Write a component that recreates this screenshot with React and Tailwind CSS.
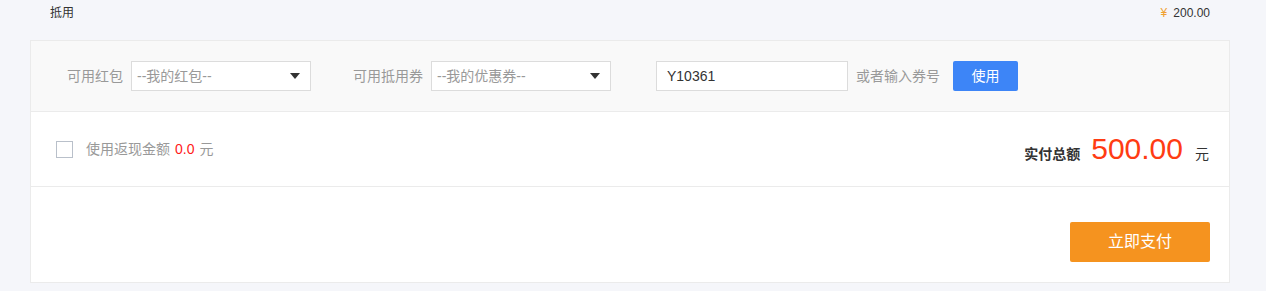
import React from 'react'

const Select = ({placeholder}) => (
  <div className="w-[180px] h-[30px] bg-white border border-[#dcdcdc] flex items-center justify-between pl-[5px] pr-[10px]">
    <span className="text-[14px] text-[#999]">{placeholder}</span>
    <span className="w-0 h-0 border-l-[5px] border-r-[5px] border-t-[6px] border-l-transparent border-r-transparent border-t-[#333]" />
  </div>
)

const App = () => {
  return (
    <div className="w-[1266px] h-[291px] bg-[#f5f6fa] font-['Liberation_Sans','Noto_Sans_CJK_SC',sans-serif] overflow-hidden">
      <div className="h-[26px] flex items-center justify-between pl-[50px] pr-[56px] text-[12px] text-[#333]">
        <span>抵用</span>
        <span><span className="text-[#f0a030] mr-[6px]">¥</span>200.00</span>
      </div>
      <div className="mt-[14px] ml-[30px] w-[1200px] border border-[#ebebeb] bg-white">
        <div className="h-[71px] bg-[#f9f9f9] border-b border-[#ebebeb] flex items-center pl-[36px]">
          <span className="text-[14px] text-[#999] mr-[8px]">可用红包</span>
          <Select placeholder="--我的红包--" />
          <span className="text-[14px] text-[#999] ml-[42px] mr-[8px]">可用抵用券</span>
          <Select placeholder="--我的优惠券--" />
          <input
            readOnly
            value="Y10361"
            className="ml-[45px] w-[192px] h-[30px] bg-white border border-[#dcdcdc] px-[10px] text-[14px] text-[#333] outline-none"
          />
          <span className="text-[14px] text-[#999] ml-[8px]">或者输入券号</span>
          <button className="ml-[13px] w-[65px] h-[30px] rounded-[2px] bg-[#3d85f7] text-white text-[14px]">使用</button>
        </div>
        <div className="h-[75px] border-b border-[#ebebeb] flex items-start justify-between pl-[25px] pr-[20px]">
          <div className="flex items-center mt-[27px]">
            <span className="w-[17px] h-[17px] border border-[#b9c0ca] bg-white" />
            <span className="ml-[13px] text-[14px] text-[#999]">使用返现金额</span>
            <span className="ml-[5px] text-[14px] text-[#ff1a1a]">0.0</span>
            <span className="ml-[5px] text-[14px] text-[#999]">元</span>
          </div>
          <div className="flex items-baseline mt-[17px]">
            <span className="text-[14px] font-bold text-[#333]">实付总额</span>
            <span className="ml-[11px] text-[30px] text-[#ff3c13] leading-[40px]">500.00</span>
            <span className="ml-[12px] text-[14px] text-[#333]">元</span>
          </div>
        </div>
        <div className="h-[95px] flex items-start justify-end pr-[19px]">
          <button className="mt-[35px] w-[140px] h-[40px] rounded-[2px] bg-[#f5931f] text-white text-[16px]">立即支付</button>
        </div>
      </div>
    </div>
  )
}

export default App
